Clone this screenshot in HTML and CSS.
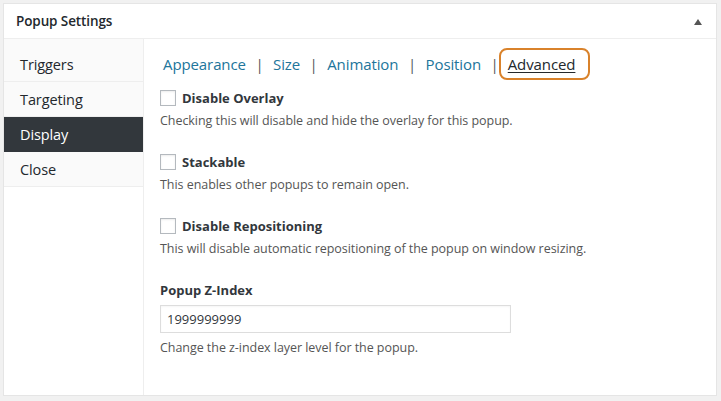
FILE: index.html
```html
<!DOCTYPE html>
<html>
<head>
<meta charset="utf-8">
<link rel="stylesheet" href="styles.css">
</head>
<body>
<div class="box">
  <div class="box-head">
    <h2 class="box-title">Popup Settings</h2>
    <span class="toggle" aria-hidden="true"></span>
  </div>
  <div class="box-main">
    <ul class="tabs">
      <li class="tab">Triggers</li>
      <li class="tab">Targeting</li>
      <li class="tab active">Display</li>
      <li class="tab">Close</li>
    </ul>
    <div class="panel">
      <nav class="subnav">
        <a class="sublink">Appearance</a><span class="sep">|</span><a class="sublink">Size</a><span class="sep">|</span><a class="sublink">Animation</a><span class="sep">|</span><a class="sublink">Position</a><span class="sep sep-last">|</span><a class="sublink current"><span class="hl">Advanced</span></a>
      </nav>
      <div class="field">
        <label class="check-row"><span class="checkbox"></span><span class="check-label">Disable Overlay</span></label>
        <p class="desc">Checking this will disable and hide the overlay for this popup.</p>
      </div>
      <div class="field">
        <label class="check-row"><span class="checkbox"></span><span class="check-label">Stackable</span></label>
        <p class="desc">This enables other popups to remain open.</p>
      </div>
      <div class="field">
        <label class="check-row"><span class="checkbox"></span><span class="check-label">Disable Repositioning</span></label>
        <p class="desc">This will disable automatic repositioning of the popup on window resizing.</p>
      </div>
      <div class="field">
        <label class="field-label">Popup Z-Index</label>
        <input class="text-input" type="text" value="1999999999">
        <p class="desc desc-input">Change the z-index layer level for the popup.</p>
      </div>
    </div>
  </div>
</div>
</body>
</html>
```

FILE: styles.css
```css
* { box-sizing: border-box; }
html, body { margin: 0; padding: 0; }
body {
  background: #f1f1f1;
  font-family: "Open Sans", "Noto Sans", sans-serif;
  color: #444;
  padding: 3px 4px 5px 3px;
}
.box {
  width: 714px;
  height: 393px;
  background: #fff;
  border: 1px solid #e5e5e5;
  display: flex;
  flex-direction: column;
}
.box-head {
  height: 35px;
  flex: none;
  border-bottom: 1px solid #eee;
  display: flex;
  align-items: center;
  justify-content: space-between;
  padding: 0 14px 0 12px;
}
.box-title {
  margin: 0;
  font-size: 13.5px;
  font-weight: 600;
  color: #23282d;
  letter-spacing: -0.1px;
}
.toggle {
  width: 0; height: 0;
  border-left: 4px solid transparent;
  border-right: 4px solid transparent;
  border-bottom: 6px solid #555;
  margin-top: 1px;
}
.box-main {
  flex: 1;
  display: flex;
}
.tabs {
  list-style: none;
  margin: 0;
  padding: 8px 0 0;
  width: 140px;
  flex: none;
  border-right: 1px solid #eee;
  align-self: stretch;
  background: linear-gradient(#fafafa, #fafafa) top / 100% 148px no-repeat;
}
.tab {
  height: 35px;
  line-height: 35px;
  padding-left: 16px;
  font-size: 14.5px;
  color: #23282d;
  border-bottom: 1px solid #eee;
  letter-spacing: -0.1px;
}
.tab.active {
  background: #32373c;
  color: #fff;
  border-bottom-color: #32373c;
}
.panel {
  flex: 1;
  padding: 14px 16px 0 16px;
}
.subnav {
  height: 22px;
  line-height: 22px;
  font-size: 15px;
  margin: 0 0 12px 3px;
  letter-spacing: -0.1px;
  white-space: nowrap;
}
.sublink { color: #21759b; }
.sep { color: #50575e; margin: 0 9.5px; }
.sep-last { margin-right: 0; }
.current { color: #23282d; }
.hl {
  border: 2px solid #d9822b;
  border-radius: 8px;
  padding: 4px 13px 4px 7px;
  text-decoration: underline;
  text-underline-offset: 2px;
}
.field { margin-bottom: 20px; }
.check-row {
  display: flex;
  align-items: center;
  height: 22px;
}
.checkbox {
  width: 16px; height: 16px;
  border: 1px solid #b4b9be;
  background: #fff;
  box-shadow: inset 0 1px 2px rgba(0,0,0,.08);
  margin-right: 6px;
  flex: none;
}
.check-label, .field-label {
  font-size: 13px;
  font-weight: 700;
  color: #32373c;
  letter-spacing: 0;
}
.field-label {
  display: block;
  height: 22px;
  line-height: 22px;
}
.desc {
  margin: 2px 0 0;
  font-size: 12.5px;
  line-height: 20px;
  color: #555;
  letter-spacing: -0.05px;
}
.text-input {
  display: block;
  margin-top: 4px;
  width: 351px;
  height: 28px;
  border: 1px solid #ddd;
  padding: 0 6px;
  font-family: inherit;
  font-size: 13px;
  color: #32373c;
  box-shadow: inset 0 1px 2px rgba(0,0,0,.04);
  outline: none;
}
.desc-input { margin-top: 5px; }
```
